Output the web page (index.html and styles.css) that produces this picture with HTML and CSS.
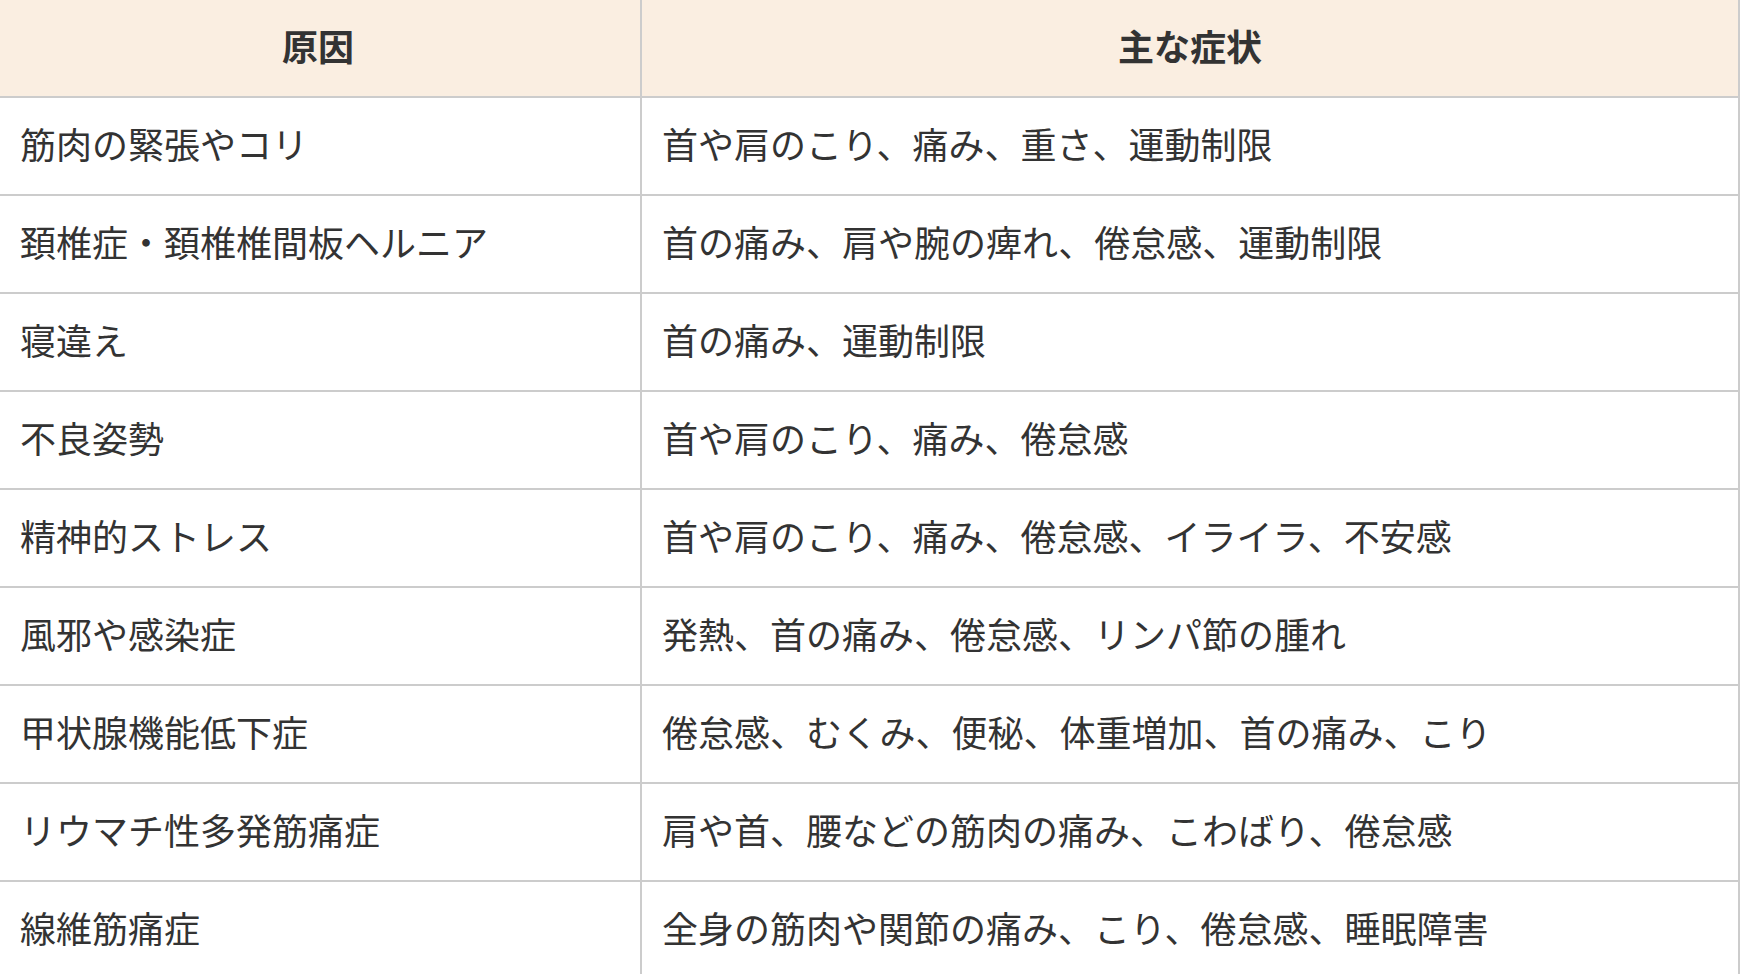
FILE: index.html
```html
<!DOCTYPE html>
<html lang="ja">
<head>
<meta charset="utf-8">
<title>原因と主な症状</title>
<link rel="stylesheet" href="styles.css">
</head>
<body>
<table class="symptoms">
  <thead>
    <tr>
      <th class="cause">原因</th>
      <th class="symptom">主な症状</th>
    </tr>
  </thead>
  <tbody>
    <tr><td class="cause">筋肉の緊張やコリ</td><td class="symptom">首や肩のこり、痛み、重さ、運動制限</td></tr>
    <tr><td class="cause">頚椎症・頚椎椎間板ヘルニア</td><td class="symptom">首の痛み、肩や腕の痺れ、倦怠感、運動制限</td></tr>
    <tr><td class="cause">寝違え</td><td class="symptom">首の痛み、運動制限</td></tr>
    <tr><td class="cause">不良姿勢</td><td class="symptom">首や肩のこり、痛み、倦怠感</td></tr>
    <tr><td class="cause">精神的ストレス</td><td class="symptom">首や肩のこり、痛み、倦怠感、イライラ、不安感</td></tr>
    <tr><td class="cause">風邪や感染症</td><td class="symptom">発熱、首の痛み、倦怠感、リンパ節の腫れ</td></tr>
    <tr><td class="cause">甲状腺機能低下症</td><td class="symptom">倦怠感、むくみ、便秘、体重増加、首の痛み、こり</td></tr>
    <tr><td class="cause">リウマチ性多発筋痛症</td><td class="symptom">肩や首、腰などの筋肉の痛み、こわばり、倦怠感</td></tr>
    <tr><td class="cause">線維筋痛症</td><td class="symptom">全身の筋肉や関節の痛み、こり、倦怠感、睡眠障害</td></tr>
  </tbody>
</table>
</body>
</html>
```
FILE: styles.css
```css
html, body {
  margin: 0;
  padding: 0;
  overflow: hidden;
  background: #ffffff;
}

body {
  font-family: "Noto Sans CJK JP", "Noto Sans", sans-serif;
  color: #333333;
}

.symptoms {
  border-collapse: separate;
  border-spacing: 0;
  table-layout: fixed;
  width: 1746px;
  margin-left: -6px;
  margin-top: -2px;
}

.symptoms th,
.symptoms td {
  font-size: 36px;
  line-height: 52px;
  padding: 19px 24px 25px;
  border-right: 2px solid #cccccc;
  border-bottom: 2px solid #cccccc;
  text-align: left;
  vertical-align: middle;
  white-space: nowrap;
}

.symptoms td.symptom {
  padding-left: 20px;
}

.symptoms th {
  background: #faeee1;
  font-weight: 700;
  text-align: center;
  border-top: 2px solid #cccccc;
}

.symptoms .cause {
  width: 596px;
  border-left: 2px solid #cccccc;
}
```
